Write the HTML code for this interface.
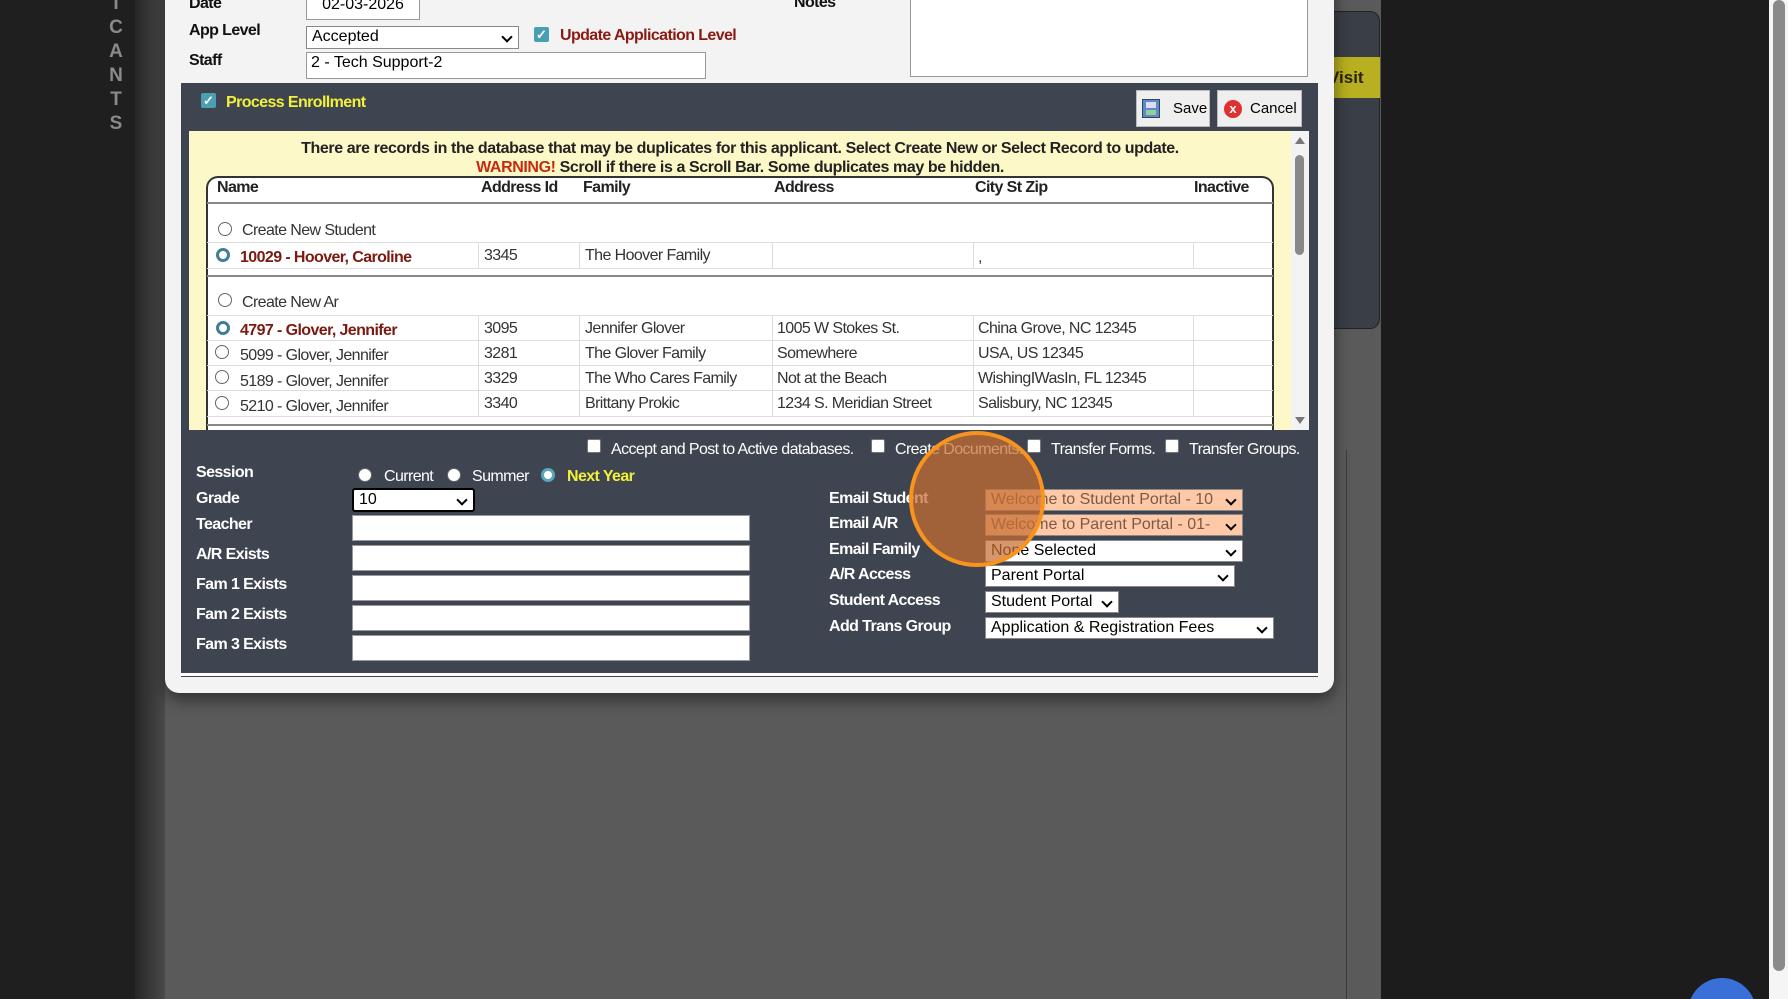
<!DOCTYPE html>
<html><head><meta charset="utf-8"><style>
*{box-sizing:border-box;margin:0;padding:0}
html{width:1788px;height:999px;overflow:hidden}
body{width:1788px;height:999px;overflow:hidden;background:#1c1c1c;position:relative;font-family:"Liberation Sans",sans-serif}
.a{position:absolute}
.lbl{position:absolute;font-weight:bold;font-size:16px;color:#fff;letter-spacing:-0.6px}
.inp{position:absolute;background:#fff;border:1px solid #999;font-size:16px;padding:1px 4px;color:#000}
.sel{position:absolute;background:#fff;border:1px solid #888;font-size:16px;padding:1px 5px;color:#000;white-space:nowrap;overflow:hidden}
.sel:after{content:"";position:absolute;right:7px;top:6px;width:6px;height:6px;border-right:2px solid #000;border-bottom:2px solid #000;transform:rotate(45deg)}
.cb{position:absolute;width:14px;height:14px;background:#fff;border:1px solid #777;border-radius:2px}
.cbc{position:absolute;width:15px;height:15px;background:#4a9fb3;border-radius:2px;color:#fff;font-size:13px;line-height:15px;text-align:center;font-weight:bold}
.rd{position:absolute;width:14px;height:14px;border-radius:50%;background:#fff;border:1px solid #666}
.rdc{position:absolute;width:14px;height:14px;border-radius:50%;background:#fff;border:3px solid #3f7f95}
.t{position:absolute;font-size:16px;color:#333;white-space:nowrap;letter-spacing:-0.6px}
.row{position:absolute;left:207px;width:1066px;border-bottom:1px solid #ddd}
.vl{position:absolute;width:1px;background:#ddd}
</style></head><body>
<div class="a" style="left:0;top:0;width:135px;height:999px;background:#1f1f1f"></div>
<div class="a" style="left:135px;top:0;width:30px;height:999px;background:linear-gradient(90deg,#262626,#4a4a4a)"></div>
<div class="a" style="left:108px;top:-8px;width:16px;font-weight:bold;font-size:19px;color:#8a8a8a;line-height:24px;text-align:center">I<br>C<br>A<br>N<br>T<br>S</div>
<div class="a" style="left:165px;top:0;width:1216px;height:999px;background:#5a5a5a"></div>
<div class="a" style="left:1346px;top:450px;width:1px;height:549px;background:#3a3a3a"></div>
<div class="a" style="left:1300px;top:11px;width:80px;height:318px;background:#3a3f47;border:1px solid #222;border-radius:10px"></div>
<div class="a" style="left:1334px;top:57px;width:46px;height:41px;background:#b8b020;color:#2a2200;font-weight:bold;font-size:17px;line-height:41px;overflow:hidden"><span style="margin-left:-6px">Visit</span></div>
<div class="a" style="left:1381px;top:0;width:388px;height:999px;background:#1c1c1c"></div>
<div class="a" style="left:1769px;top:0;width:19px;height:999px;background:#f5f5f5"></div>
<div class="a" style="left:1773px;top:0;width:12px;height:971px;background:#8a8a8a;border-radius:6px"></div>
<div class="a" style="left:1688px;top:978px;width:68px;height:21px;overflow:hidden"><div style="width:68px;height:68px;background:#3a6fd8;border-radius:50%"></div></div>
<div class="a" style="left:165px;top:-20px;width:1169px;height:713px;background:#f3f3f3;border-radius:0 0 14px 14px;box-shadow:0 6px 16px rgba(0,0,0,.5)"></div>
<div class="lbl" style="left:189px;top:-5px;color:#111">Date</div>
<div class="inp" style="left:306px;top:-6px;width:114px;height:26px;text-align:center">02-03-2026</div>
<div class="lbl" style="left:794px;top:-6px;color:#111">Notes</div>
<div class="a" style="left:910px;top:-5px;width:398px;height:82px;background:#fff;border:1px solid #999"></div>
<div class="lbl" style="left:189px;top:22px;color:#111">App Level</div>
<div class="sel" style="left:306px;top:26px;width:213px;height:23px">Accepted</div>
<div class="cbc" style="left:534px;top:27px">✓</div>
<div class="lbl" style="left:560px;top:27px;color:#8b1a14">Update Application Level</div>
<div class="lbl" style="left:189px;top:52px;color:#111">Staff</div>
<div class="inp" style="left:306px;top:52px;width:400px;height:27px">2 - Tech Support-2</div>
<div class="a" style="left:181px;top:83px;width:1137px;height:594px;background:#3e4550"></div>
<div class="a" style="left:181px;top:673px;width:1137px;height:3px;background:#fff"></div>
<div class="cbc" style="left:201px;top:93px">✓</div>
<div class="lbl" style="left:226px;top:94px;color:#f2f03a">Process Enrollment</div>
<div class="a" style="left:1136px;top:90px;width:74px;height:37px;background:#efefef;border:1px solid #bbb;font-size:15px;line-height:35px;padding-left:36px">Save</div>
<div class="a" style="left:1142px;top:99px;width:18px;height:19px;background:#5a8ccc;border:1px solid #345"><div style="margin:2px 3px;height:6px;background:#dde"></div><div style="margin:2px 3px;height:5px;background:#9c9"></div></div>
<div class="a" style="left:1217px;top:90px;width:85px;height:37px;background:#efefef;border:1px solid #bbb;font-size:15px;line-height:35px;padding-left:32px">Cancel</div>
<div class="a" style="left:1224px;top:100px;width:18px;height:18px;background:#e03030;border-radius:50%;color:#fff;font-size:13px;font-weight:bold;text-align:center;line-height:18px">x</div>
<div class="a" style="left:189px;top:131px;width:1120px;height:299px;background:#fcf8c8"></div>
<div class="a" style="left:1291px;top:131px;width:18px;height:299px;background:#f3f3f3"></div>
<div class="a" style="left:1295px;top:137px;width:0;height:0;border:5px solid transparent;border-bottom:7px solid #777;border-top:0"></div>
<div class="a" style="left:1295px;top:155px;width:9px;height:100px;background:#888;border-radius:5px"></div>
<div class="a" style="left:1295px;top:417px;width:0;height:0;border:5px solid transparent;border-top:7px solid #777;border-bottom:0"></div>
<div class="a" style="left:189px;top:139px;width:1102px;text-align:center;font-weight:bold;font-size:16px;color:#222;line-height:19px;letter-spacing:-0.4px">There are records in the database that may be duplicates for this applicant. Select Create New or Select Record to update.<br><span style="color:#c82a10">WARNING!</span> Scroll if there is a Scroll Bar. Some duplicates may be hidden.</div>
<div class="a" style="left:206px;top:176px;width:1068px;height:254px;background:#fff;border:2px solid #333;border-bottom:none;border-radius:12px 12px 0 0"></div>
<div class="a" style="left:207px;top:202px;width:1066px;height:2px;background:#888"></div>
<div class="t" style="left:217px;top:179px;font-weight:bold;color:#222">Name</div>
<div class="t" style="left:481px;top:179px;font-weight:bold;color:#222">Address Id</div>
<div class="t" style="left:583px;top:179px;font-weight:bold;color:#222">Family</div>
<div class="t" style="left:774px;top:179px;font-weight:bold;color:#222">Address</div>
<div class="t" style="left:975px;top:179px;font-weight:bold;color:#222">City St Zip</div>
<div class="t" style="left:1194px;top:179px;font-weight:bold;color:#222">Inactive</div>
<div class="row" style="top:242px;height:1px"></div>
<div class="row" style="top:268px;height:1px"></div>
<div class="a" style="left:207px;top:275px;width:1066px;height:2px;background:#888"></div>
<div class="row" style="top:315px;height:1px"></div>
<div class="row" style="top:340px;height:1px"></div>
<div class="row" style="top:365px;height:1px"></div>
<div class="row" style="top:390px;height:1px"></div>
<div class="row" style="top:416px;height:1px"></div>
<div class="a" style="left:207px;top:424px;width:1066px;height:2px;background:#888"></div>
<div class="vl" style="left:478px;top:243px;height:26px"></div><div class="vl" style="left:579px;top:243px;height:26px"></div><div class="vl" style="left:772px;top:243px;height:26px"></div><div class="vl" style="left:973px;top:243px;height:26px"></div><div class="vl" style="left:1193px;top:243px;height:26px"></div>
<div class="vl" style="left:478px;top:316px;height:101px"></div><div class="vl" style="left:579px;top:316px;height:101px"></div><div class="vl" style="left:772px;top:316px;height:101px"></div><div class="vl" style="left:973px;top:316px;height:101px"></div><div class="vl" style="left:1193px;top:316px;height:101px"></div>
<div class="rd" style="left:218px;top:222px"></div><div class="t" style="left:242px;top:222px">Create New Student</div>
<div class="rdc" style="left:216px;top:248px"></div><div class="t" style="left:240px;top:249px;font-weight:bold;color:#7a1a10">10029 - Hoover, Caroline</div>
<div class="t" style="left:484px;top:247px">3345</div><div class="t" style="left:585px;top:247px">The Hoover Family</div><div class="t" style="left:978px;top:249px">,</div>
<div class="rd" style="left:218px;top:293px"></div><div class="t" style="left:242px;top:294px">Create New Ar</div>
<div class="rdc" style="left:216px;top:321px"></div><div class="t" style="left:240px;top:322px;font-weight:bold;color:#7a1a10">4797 - Glover, Jennifer</div>
<div class="t" style="left:484px;top:320px">3095</div><div class="t" style="left:585px;top:320px">Jennifer Glover</div><div class="t" style="left:777px;top:320px">1005 W Stokes St.</div><div class="t" style="left:978px;top:320px">China Grove, NC 12345</div>
<div class="rd" style="left:215px;top:345px"></div><div class="t" style="left:240px;top:347px">5099 - Glover, Jennifer</div>
<div class="t" style="left:484px;top:345px">3281</div><div class="t" style="left:585px;top:345px">The Glover Family</div><div class="t" style="left:777px;top:345px">Somewhere</div><div class="t" style="left:978px;top:345px">USA, US 12345</div>
<div class="rd" style="left:215px;top:370px"></div><div class="t" style="left:240px;top:373px">5189 - Glover, Jennifer</div>
<div class="t" style="left:484px;top:370px">3329</div><div class="t" style="left:585px;top:370px">The Who Cares Family</div><div class="t" style="left:777px;top:370px">Not at the Beach</div><div class="t" style="left:978px;top:370px">WishingIWasIn, FL 12345</div>
<div class="rd" style="left:215px;top:396px"></div><div class="t" style="left:240px;top:398px">5210 - Glover, Jennifer</div>
<div class="t" style="left:484px;top:395px">3340</div><div class="t" style="left:585px;top:395px">Brittany Prokic</div><div class="t" style="left:777px;top:395px">1234 S. Meridian Street</div><div class="t" style="left:978px;top:395px">Salisbury, NC 12345</div>
<div class="cb" style="left:587px;top:439px"></div><div class="t" style="left:611px;top:441px;color:#fff">Accept and Post to Active databases.</div>
<div class="cb" style="left:871px;top:439px"></div><div class="t" style="left:895px;top:441px;color:#fff">Create Documents.</div>
<div class="cb" style="left:1027px;top:439px"></div><div class="t" style="left:1051px;top:441px;color:#fff">Transfer Forms.</div>
<div class="cb" style="left:1165px;top:439px"></div><div class="t" style="left:1189px;top:441px;color:#fff">Transfer Groups.</div>
<div class="lbl" style="left:196px;top:464px">Session</div>
<div class="rd" style="left:358px;top:468px"></div><div class="t" style="left:384px;top:468px;color:#fff">Current</div>
<div class="rd" style="left:447px;top:468px"></div><div class="t" style="left:472px;top:468px;color:#fff">Summer</div>
<div class="rdc" style="left:541px;top:468px;border-color:#5aa7bd"></div><div class="t" style="left:567px;top:468px;color:#f2f03a;font-weight:bold">Next Year</div>
<div class="lbl" style="left:196px;top:490px">Grade</div>
<div class="sel" style="left:352px;top:488px;width:123px;height:24px;border:2px solid #000;border-radius:3px">10</div>
<div class="lbl" style="left:196px;top:516px">Teacher</div><div class="inp" style="left:352px;top:515px;width:398px;height:26px"></div>
<div class="lbl" style="left:196px;top:546px">A/R Exists</div><div class="inp" style="left:352px;top:545px;width:398px;height:26px"></div>
<div class="lbl" style="left:196px;top:576px">Fam 1 Exists</div><div class="inp" style="left:352px;top:575px;width:398px;height:26px"></div>
<div class="lbl" style="left:196px;top:606px">Fam 2 Exists</div><div class="inp" style="left:352px;top:605px;width:398px;height:26px"></div>
<div class="lbl" style="left:196px;top:636px">Fam 3 Exists</div><div class="inp" style="left:352px;top:635px;width:398px;height:26px"></div>
<div class="lbl" style="left:829px;top:490px">Email Student</div>
<div class="lbl" style="left:829px;top:515px">Email A/R</div>
<div class="lbl" style="left:829px;top:541px">Email Family</div>
<div class="lbl" style="left:829px;top:566px">A/R Access</div>
<div class="lbl" style="left:829px;top:592px">Student Access</div>
<div class="lbl" style="left:829px;top:618px">Add Trans Group</div>
<div class="sel" style="left:985px;top:489px;width:258px;height:22px;background:#ffc8a6;color:#7a5a48">Welcome to Student Portal - 10</div>
<div class="sel" style="left:985px;top:514px;width:258px;height:22px;background:#ffc8a6;color:#7a5a48">Welcome to Parent Portal - 01-</div>
<div class="sel" style="left:985px;top:540px;width:258px;height:22px">None Selected</div>
<div class="sel" style="left:985px;top:565px;width:250px;height:22px">Parent Portal</div>
<div class="sel" style="left:985px;top:591px;width:134px;height:22px">Student Portal</div>
<div class="sel" style="left:985px;top:617px;width:289px;height:22px">Application &amp; Registration Fees</div>
<div class="a" style="left:909px;top:431px;width:136px;height:136px;border-radius:50%;background:rgba(200,110,50,0.72);border:4px solid #f7931e"></div>
</body></html>
